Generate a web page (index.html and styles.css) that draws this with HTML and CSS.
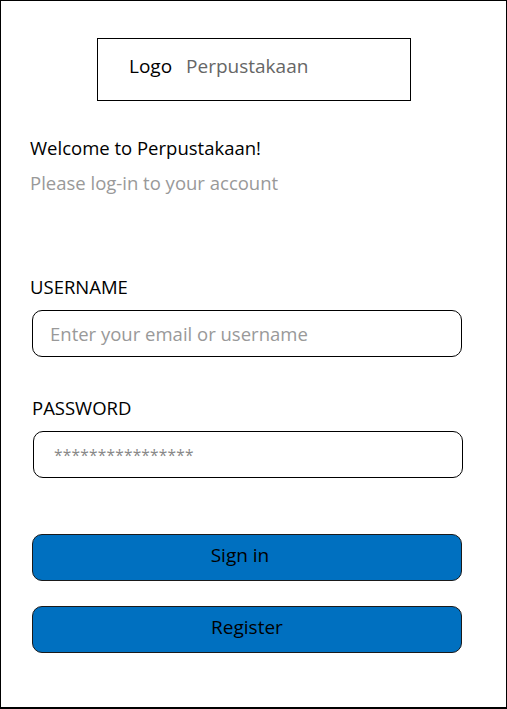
FILE: index.html
```html
<!DOCTYPE html>
<html>
<head>
<meta charset="utf-8">
<link rel="stylesheet" href="styles.css">
</head>
<body>
<div class="frame">
  <div class="logo-box">
    <span class="logo">Logo</span>
    <span class="brand">Perpustakaan</span>
  </div>
  <div class="welcome">
    <div class="title">Welcome to Perpustakaan!</div>
    <div class="subtitle">Please log-in to your account</div>
  </div>
  <div class="field field-user">
    <div class="label">USERNAME</div>
    <div class="input"><span class="placeholder">Enter your email or username</span></div>
  </div>
  <div class="field field-pass">
    <div class="label">PASSWORD</div>
    <div class="input"><span class="stars">****************</span></div>
  </div>
  <div class="buttons">
    <div class="btn btn-sign">Sign in</div>
    <div class="btn">Register</div>
  </div>
</div>
</body>
</html>
```
FILE: styles.css
```css
html, body {
  margin: 0;
  padding: 0;
  background: #fff;
}
body {
  font-family: "Open Sans", "Liberation Sans", sans-serif;
  color: #000;
}
.frame {
  box-sizing: border-box;
  width: 507px;
  height: 709px;
  border: 1px solid #000;
  border-bottom-width: 2px;
  display: flex;
  flex-direction: column;
  padding: 37px 0 0 0;
}
.logo-box {
  box-sizing: border-box;
  margin-left: 96px;
  width: 314px;
  height: 63px;
  border: 1px solid #000;
  display: flex;
  align-items: center;
  padding-left: 31px;
  padding-bottom: 8px;
  gap: 14px;
  font-size: 19px;
}
.logo { color: #000; }
.brand { color: #666; }
.welcome {
  margin-top: 29px;
  padding-left: 29px;
  font-size: 18.5px;
  line-height: 35px;
}
.subtitle { color: #999; }
.field { display: flex; flex-direction: column; }
.label {
  font-size: 18.5px;
  line-height: 24px;
}
.field-user { margin-top: 75px; padding-left: 29px; }
.field-pass { margin-top: 39px; padding-left: 31px; }
.input {
  box-sizing: border-box;
  width: 430px;
  height: 47px;
  border: 1px solid #000;
  border-radius: 10px;
  display: flex;
  align-items: center;
  margin-top: 11px;
  margin-left: 2px;
  font-size: 18.5px;
}
.field-pass .input { margin-left: 1px; margin-top: 11px; }
.placeholder { color: #999; padding-left: 17px; }
.stars { color: #888; padding-left: 20px; font-size: 15.5px; letter-spacing: 0.2px; }
.buttons {
  margin-top: 56px;
  padding-left: 31px;
  display: flex;
  flex-direction: column;
  gap: 25px;
}
.btn {
  box-sizing: border-box;
  width: 430px;
  height: 47px;
  background: #0070c0;
  border: 1px solid #1a1a1a;
  border-radius: 10px;
  display: flex;
  align-items: center;
  justify-content: center;
  font-size: 19px;
  padding-bottom: 5px;
}
.btn-sign { padding-right: 14px; }
```
